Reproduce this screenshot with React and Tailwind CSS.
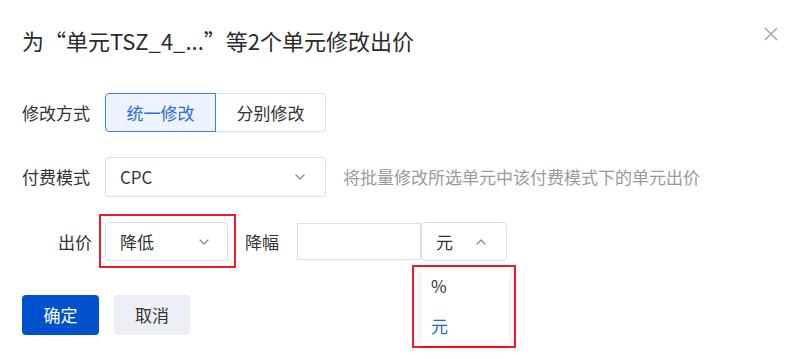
import React from 'react';

const Chevron = ({ up = false }) => (
  <svg width="14" height="14" viewBox="0 0 14 14" fill="none" className="text-[#8a8f99]">
    <path d={up ? 'M3 9l4-4 4 4' : 'M3 5l4 4 4-4'} stroke="currentColor" strokeWidth="1.4" strokeLinecap="round" strokeLinejoin="round" />
  </svg>
);

export default function App() {
  return (
    <div className="relative w-[806px] h-[359px] bg-white font-['Noto_Sans_CJK_SC',sans-serif] text-[#333]">
      <div className="px-[22px] pt-[24px]">
        {/* header */}
        <div className="flex items-start justify-between h-[32px]">
          <h1 className="text-[22px] leading-[32px] text-[#2b2b2b] font-normal whitespace-nowrap">
            为“单元TSZ_4_...”等2个单元修改出价
          </h1>
          <button className="mt-[2px] mr-[5px] text-[#9aa0aa]">
            <svg width="16" height="16" viewBox="0 0 16 16" fill="none">
              <path d="M2 2l12 12M14 2L2 14" stroke="currentColor" strokeWidth="1.4" />
            </svg>
          </button>
        </div>

        {/* 修改方式 */}
        <div className="flex items-center mt-[37px]">
          <span className="w-[83px] text-[17px] text-[#333]">修改方式</span>
          <div className="flex h-[39px]">
            <button className="w-[111px] rounded-l-[4px] border border-[#3d7ff2] bg-[#eef4ff] text-[17px] text-[#2c6cdc]">统一修改</button>
            <button className="w-[110px] rounded-r-[4px] border border-l-0 border-[#dcdfe6] bg-white text-[17px] text-[#333]">分别修改</button>
          </div>
        </div>

        {/* 付费模式 */}
        <div className="flex items-center mt-[25px]">
          <span className="w-[83px] text-[17px]">付费模式</span>
          <div className="flex items-center justify-between w-[221px] h-[40px] px-[14px] pr-[18px] rounded-[4px] border border-[#dcdfe6] text-[17px]">
            <span>CPC</span>
            <Chevron />
          </div>
          <span className="ml-[17px] text-[17px] text-[#9a9a9a]">将批量修改所选单元中该付费模式下的单元出价</span>
        </div>

        {/* 出价 */}
        <div className="flex items-center mt-[25px]">
          <span className="w-[70px] text-right text-[17px]">出价</span>
          <div className="relative ml-[13px] flex items-center justify-between w-[123px] h-[39px] pl-[14px] pr-[16px] rounded-[4px] border border-[#dcdfe6] text-[17px]">
            <span>降低</span>
            <Chevron />
            <span className="pointer-events-none absolute -left-[7px] -top-[9px] -right-[9px] -bottom-[8px] border-2 border-[#ee1c24]" />
          </div>
          <span className="ml-[17px] w-[52px] text-[17px]">降幅</span>
          <div className="w-[124px] h-[37px] border border-[#dcdfe6] bg-white" />
          <div className="relative flex items-center justify-between w-[86px] h-[39px] pl-[14px] pr-[18px] rounded-[4px] border border-[#dcdfe6] text-[17px]">
            <span>元</span>
            <Chevron up />
            <div className="absolute left-[-10px] top-[42px] w-[104px] h-[83px] border-2 border-[#ee1c24] p-[1px]">
              <div className="h-full w-[88px] ml-[6px] bg-white shadow-[0_2px_8px_rgba(0,0,0,0.12)] flex flex-col pl-[10px] pt-[5px] gap-[14px] text-[17px]">
                <span className="text-[#333]">%</span>
                <span className="text-[#2266d6]">元</span>
              </div>
            </div>
          </div>
        </div>

        {/* buttons */}
        <div className="flex gap-[15px] mt-[34px]">
          <button className="w-[77px] h-[40px] rounded-[4px] bg-[#0052cc] text-white text-[17px]">确定</button>
          <button className="w-[76px] h-[40px] rounded-[4px] bg-[#eceff5] text-[#333] text-[17px]">取消</button>
        </div>
      </div>
    </div>
  );
}
